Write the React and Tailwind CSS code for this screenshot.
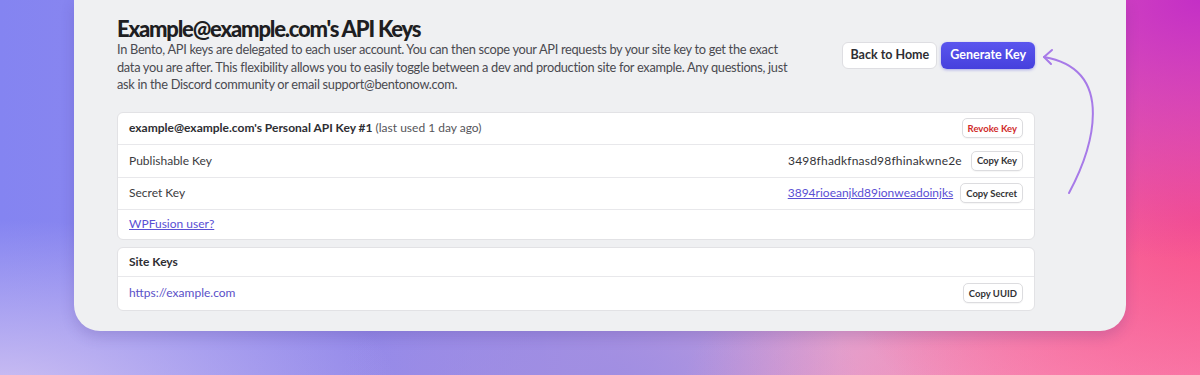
import React from "react";

const font = { fontFamily: "Lato, 'Noto Sans', sans-serif" };

function SmallBtn({ children, red }) {
  return (
    <button
      className={
        "h-[20px] px-[5px] rounded-[5px] border border-[#dcdcdf] bg-white text-[9.5px] font-bold leading-none shadow-[0_1px_1px_rgba(0,0,0,0.04)] " +
        (red ? "text-[#d02b2b]" : "text-[#333336]")
      }
    >
      {children}
    </button>
  );
}

export default function App() {
  return (
    <div
      style={font}
      className="relative w-[1200px] h-[375px] overflow-hidden bg-[radial-gradient(ellipse_420px_260px_at_1200px_0px,#c42fc6_0%,rgba(196,47,198,0)_100%),radial-gradient(ellipse_380px_260px_at_1200px_220px,#f8528c_0%,rgba(248,82,140,0)_100%),radial-gradient(ellipse_420px_200px_at_1100px_400px,#fb8fb6_0%,rgba(251,143,182,0)_100%),radial-gradient(ellipse_400px_180px_at_0px_400px,#d0c2f2_0%,rgba(208,194,242,0)_100%),radial-gradient(ellipse_260px_120px_at_600px_380px,#a08ee2_0%,rgba(160,142,226,0)_100%),linear-gradient(90deg,#8484f1_0%,#9c8ce6_45%,#d8a6d6_70%,#f880ac_100%)]"
    >
      <div className="mx-[74px] h-[331px] rounded-b-[26px] bg-[#eff0f2] shadow-[0_6px_14px_rgba(60,40,120,0.18)] pl-[43px] pr-[91px] pt-[16px]">
        <div className="flex justify-between items-start">
          <div>
            <h1 className="text-[22px] leading-[26px] font-black tracking-[-1.2px] text-[#1e1e22]">
              Example@example.com's API Keys
            </h1>
            <p className="-mt-[1px] w-[690px] text-[12.8px] leading-[17.6px] tracking-[-0.3px] text-[#4a4a50]">
              In Bento, API keys are delegated to each user account. You can then scope your API requests by your site key to get the exact
              <br />
              data you are after. This flexibility allows you to easily toggle between a dev and production site for example. Any questions, just
              <br />
              ask in the Discord community or email support@bentonow.com.
            </p>
          </div>
          <div className="flex gap-[4px] mt-[26px]">
            <button className="h-[27px] px-[7px] rounded-[6px] border border-[#dedee2] bg-white text-[12.5px] font-bold text-[#2e2e33]">
              Back to Home
            </button>
            <button className="h-[27px] px-[9px] rounded-[6px] bg-[linear-gradient(180deg,#5a55ee,#4640dd)] text-[12.5px] font-bold text-white shadow-[0_1px_3px_rgba(70,64,221,0.4)]">
              Generate Key
            </button>
          </div>
        </div>

        <div className="mt-[18px] rounded-[6px] border border-[#e2e2e5] bg-white text-[12px] text-[#3b3b40]">
          <div className="h-[32px] flex items-center justify-between px-[11px] border-b border-[#e8e8eb]">
            <div>
              <span className="font-bold text-[#2e2e33]">example@example.com's Personal API Key #1</span>
              <span className="text-[#55555a]"> (last used 1 day ago)</span>
            </div>
            <SmallBtn red>Revoke Key</SmallBtn>
          </div>
          <div className="h-[33px] flex items-center justify-between px-[11px] border-b border-[#e8e8eb]">
            <span>Publishable Key</span>
            <div className="flex items-center gap-[9px]">
              <span className="tracking-[0.2px] text-[#333338]">3498fhadkfnasd98fhinakwne2e</span>
              <SmallBtn>Copy Key</SmallBtn>
            </div>
          </div>
          <div className="h-[32px] flex items-center justify-between px-[11px] border-b border-[#e8e8eb]">
            <span>Secret Key</span>
            <div className="flex items-center gap-[7px]">
              <span className="underline text-[#5a4fd4]">3894rioeanjkd89ionweadoinjks</span>
              <SmallBtn>Copy Secret</SmallBtn>
            </div>
          </div>
          <div className="h-[29px] flex items-center px-[11px]">
            <span className="underline text-[#5a4fd4]">WPFusion user?</span>
          </div>
        </div>

        <div className="mt-[7px] rounded-[6px] border border-[#e2e2e5] bg-white text-[12px] text-[#3b3b40]">
          <div className="h-[29px] flex items-center px-[11px] border-b border-[#e8e8eb]">
            <span className="font-bold text-[#2e2e33]">Site Keys</span>
          </div>
          <div className="h-[33px] flex items-center justify-between px-[11px]">
            <span className="text-[#5a50c8]">https://example.com</span>
            <SmallBtn>Copy UUID</SmallBtn>
          </div>
        </div>
      </div>

      <svg
        className="absolute left-[1030px] top-[40px]"
        width="90"
        height="160"
        viewBox="0 0 90 160"
        fill="none"
      >
        <path
          d="M39 153 C62 110, 88 30, 14 17"
          stroke="#a77ae8"
          strokeWidth="2"
          strokeLinecap="round"
        />
        <path
          d="M22 10 L14 17 L21 24"
          stroke="#a77ae8"
          strokeWidth="2"
          strokeLinecap="round"
          strokeLinejoin="round"
        />
      </svg>
    </div>
  );
}
